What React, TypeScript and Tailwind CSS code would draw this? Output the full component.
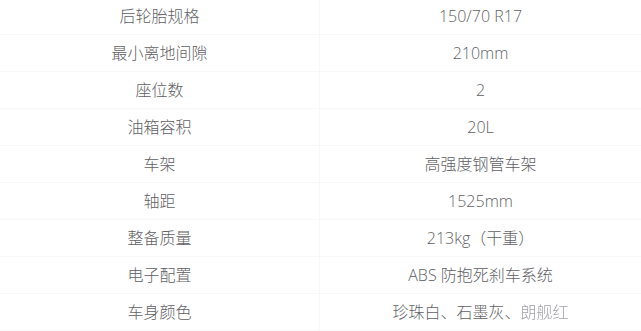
import React from 'react';

const specs = [
  { label: '后轮胎规格', value: '150/70 R17' },
  { label: '最小离地间隙', value: '210mm' },
  { label: '座位数', value: '2' },
  { label: '油箱容积', value: '20L' },
  { label: '车架', value: '高强度钢管车架' },
  { label: '轴距', value: '1525mm' },
  { label: '整备质量', value: '213kg（干重）' },
  { label: '电子配置', value: 'ABS 防抱死刹车系统' },
  { label: '车身颜色', value: '珍珠白、石墨灰、', faded: '朗舰红' },
];

export default function App() {
  return (
    <div
      className="w-[641px] h-[331px] overflow-hidden bg-white text-[#5f5f66] text-[16px] font-light"
      style={{ fontFamily: '"Segoe UI", "Open Sans", "Noto Sans CJK SC", sans-serif' }}
    >
      <div className="-mt-[2px]">
        {specs.map((row) => (
          <div key={row.label} className="grid grid-cols-[320px_1fr] h-[37px] border-b border-[#f7f7f7]">
            <div className="flex items-center justify-center border-r border-[#f7f7f7]">{row.label}</div>
            <div className="flex items-center justify-center">
              {row.value}
              {row.faded && <span className="text-[#a0a0aa] blur-[0.4px]">{row.faded}</span>}
            </div>
          </div>
        ))}
      </div>
    </div>
  );
}
